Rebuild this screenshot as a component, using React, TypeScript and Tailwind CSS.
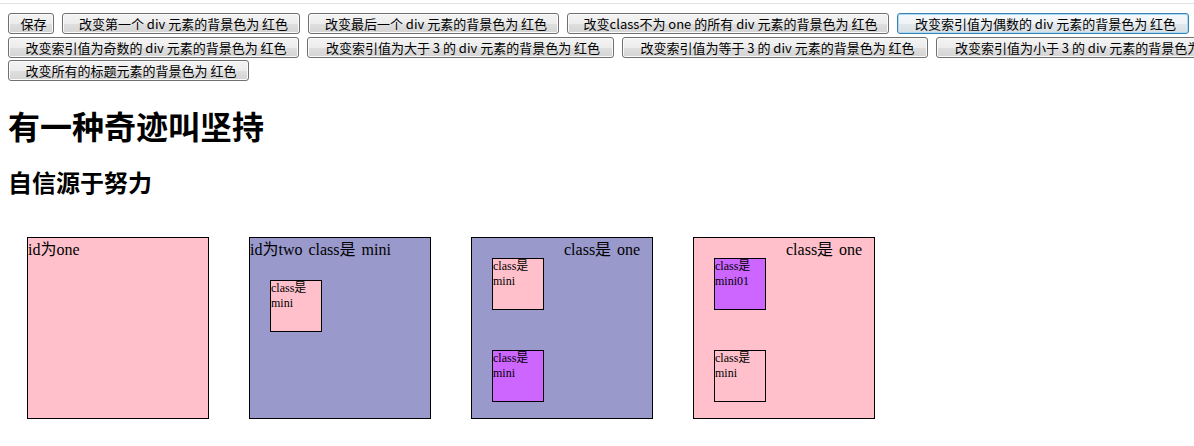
import React from "react";

const btnBase =
  "h-[21px] shrink-0 flex items-center justify-center rounded-[3px] border text-[13px] leading-none text-black whitespace-nowrap font-['Noto_Sans_CJK_SC',sans-serif]";
const btnNormal =
  "border-[#707070] bg-[linear-gradient(#f4f4f4_0%,#ececec_50%,#dfdfdf_51%,#d4d4d4_100%)] shadow-[inset_0_0_0_1px_#fbfbfb]";
const btnFocus =
  "border-[#3c7fb1] bg-[linear-gradient(#f6f9fb_0%,#eef3f6_50%,#e2e8ec_51%,#d8dfe4_100%)] shadow-[inset_0_0_0_1px_#a9dbf6]";

function Btn({ w, label, focus }: { w: string; label: string; focus?: boolean }) {
  return (
    <div className={`${btnBase} ${focus ? btnFocus : btnNormal} ${w}`}>
      <span className="pl-[5px]">{label}</span>
    </div>
  );
}

const serif = "font-['Liberation_Serif','Noto_Sans_CJK_SC',serif] text-black";
const big = "text-[16px] leading-[22px] [word-spacing:2px] whitespace-nowrap";

function Mini({ bg, text }: { bg: string; text: string }) {
  return (
    <div className={`w-[52px] h-[52px] shrink-0 border border-black ${bg} ${serif} text-[12px] leading-[15px] break-words`}>
      {text}
    </div>
  );
}

export default function App() {
  return (
    <div className="w-[1194px] h-[446px] overflow-hidden bg-white">
      <div className="h-[4px] border-b border-[#e2e2e2]" />
      <div className="pl-[8px] pt-[9px]">
        <div className="flex gap-[8px]">
          <Btn w="w-[46px]" label="保存" />
          <Btn w="w-[238px]" label="改变第一个 div 元素的背景色为 红色" />
          <Btn w="w-[251px]" label="改变最后一个 div 元素的背景色为 红色" />
          <Btn w="w-[322px]" label="改变class不为 one 的所有 div 元素的背景色为 红色" />
          <Btn w="w-[292px]" label="改变索引值为偶数的 div 元素的背景色为 红色" focus />
        </div>
        <div className="flex gap-[8px] mt-[3px]">
          <Btn w="w-[291px]" label="改变索引值为奇数的 div 元素的背景色为 红色" />
          <Btn w="w-[307px]" label="改变索引值为大于 3 的 div 元素的背景色为 红色" />
          <Btn w="w-[306px]" label="改变索引值为等于 3 的 div 元素的背景色为 红色" />
          <Btn w="w-[307px]" label="改变索引值为小于 3 的 div 元素的背景色为 红色" />
        </div>
        <div className="flex gap-[8px] mt-[2px]">
          <Btn w="w-[241px]" label="改变所有的标题元素的背景色为 红色" />
        </div>
      </div>
      <h1 className="pl-[8px] mt-[28px] text-[32px] leading-[32px] font-bold text-black font-['Noto_Sans_CJK_SC',sans-serif]">
        有一种奇迹叫坚持
      </h1>
      <h2 className="pl-[8px] mt-[29px] text-[24px] leading-[24px] font-bold text-black font-['Noto_Sans_CJK_SC',sans-serif]">
        自信源于努力
      </h2>
      <div className="flex gap-[40px] pl-[27px] mt-[43px]">
        {/* box 1 */}
        <div className={`w-[182px] h-[182px] border border-black bg-[#ffc0cb] ${serif}`}>
          <div className={`${big} pt-[1px]`}>id为one</div>
        </div>
        {/* box 2 */}
        <div className={`w-[182px] h-[182px] border border-black bg-[#9999cc] ${serif}`}>
          <div className={`${big} pt-[1px]`}>id为two class是 mini</div>
          <div className="pl-[20px] pt-[19px]">
            <Mini bg="bg-[#ffc0cb]" text="class是 mini" />
          </div>
        </div>
        {/* box 3 */}
        <div className="w-[182px] h-[182px] border border-black bg-[#9999cc] flex">
          <div className="flex flex-col gap-[40px] pl-[20px] pt-[20px]">
            <Mini bg="bg-[#ffc0cb]" text="class是 mini" />
            <Mini bg="bg-[#cc66ff]" text="class是 mini" />
          </div>
          <div className={`pl-[20px] pt-[1px] ${serif} ${big}`}>class是 one</div>
        </div>
        {/* box 4 */}
        <div className="w-[182px] h-[182px] border border-black bg-[#ffc0cb] flex">
          <div className="flex flex-col gap-[40px] pl-[20px] pt-[20px]">
            <Mini bg="bg-[#cc66ff]" text="class是 mini01" />
            <Mini bg="bg-transparent" text="class是 mini" />
          </div>
          <div className={`pl-[20px] pt-[1px] ${serif} ${big}`}>class是 one</div>
        </div>
      </div>
    </div>
  );
}
